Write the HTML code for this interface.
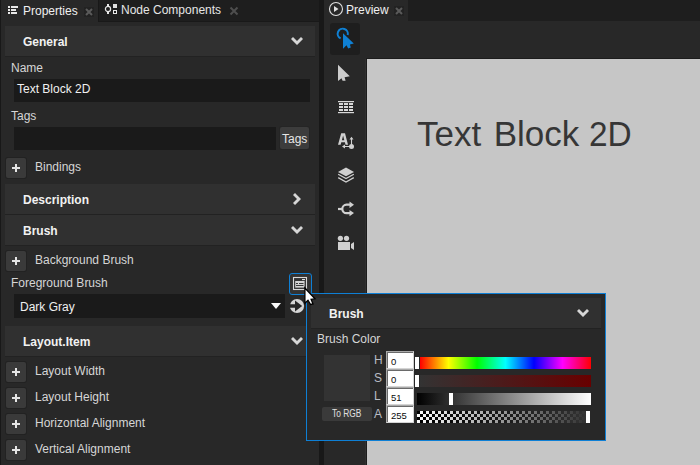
<!DOCTYPE html>
<html><head><meta charset="utf-8">
<style>
*{margin:0;padding:0;box-sizing:border-box}
html,body{width:700px;height:465px;overflow:hidden;background:#1e1e1e;font-family:"Liberation Sans",sans-serif;font-size:12px;color:#d6d6d6}
.a{position:absolute}
.t{position:absolute;white-space:nowrap;line-height:14px;height:14px}
.hdr{position:absolute;left:5px;width:310px;height:31px;background:#303030;border-bottom:1px solid #222}
.hdr .t{left:18px;top:9px!important;font-weight:bold;color:#f2f2f2}
.inp{position:absolute;background:#1a1a1a}
.plus{position:absolute;left:6px;width:20px;height:20px;background:#3a3a3a;border-radius:2px;box-shadow:0 0 0 1px #222}
.plus:before{content:"";position:absolute;left:6px;top:9px;width:8px;height:2px;background:#e6e6e6}
.plus:after{content:"";position:absolute;left:9px;top:6px;width:2px;height:8px;background:#e6e6e6}
.box{position:absolute;left:386px;width:28px;height:18px;background:#fff;border:1px solid;border-color:#a9a9a9 #d4d4d4 #d4d4d4 #a9a9a9;box-shadow:inset 1px 1px 0 #6a6a6a}
.box .v{position:absolute;left:4px;top:3.6px;font-size:9.5px;line-height:12px;color:#0a0a0a}
</style></head><body>
<!-- tab bar -->
<div class="a" style="left:0;top:0;width:1px;height:465px;background:#181818"></div>
<div class="a" style="left:1px;top:0;width:97px;height:22px;background:#282828"></div>
<div class="a" style="left:98px;top:0;width:1px;height:22px;background:#181818"></div>
<!-- list icon -->
<div class="a" style="left:8px;top:6px;width:2px;height:2px;background:#e8e8e8"></div>
<div class="a" style="left:8px;top:9px;width:2px;height:2px;background:#e8e8e8"></div>
<div class="a" style="left:8px;top:12px;width:2px;height:2px;background:#e8e8e8"></div>
<div class="a" style="left:11px;top:6px;width:7px;height:2px;background:#e8e8e8"></div>
<div class="a" style="left:11px;top:9px;width:5px;height:2px;background:#e8e8e8"></div>
<div class="a" style="left:11px;top:12px;width:6px;height:2px;background:#e8e8e8"></div>
<div class="t" style="left:23px;top:4px;color:#f0f0f0">Properties</div>
<div class="a" style="left:84px;top:7px;width:10px;height:10px;background:#222"></div>
<svg class="a" style="left:84px;top:7px" width="10" height="10"><path d="M2 2L8 8M8 2L2 8" stroke="#5a5a5a" stroke-width="2"/></svg>

<!-- node components icon -->
<svg class="a" style="left:103px;top:3px" width="16" height="12">
<circle cx="5" cy="6" r="2.6" fill="none" stroke="#e8e8e8" stroke-width="1.2"/>
<rect x="4" y="1" width="2" height="2.6" fill="#e8e8e8"/><rect x="4" y="8.4" width="2" height="2.6" fill="#e8e8e8"/>
<rect x="10" y="1" width="4" height="4" fill="#e0e0e0"/>
<rect x="10.5" y="7.5" width="3" height="3" fill="none" stroke="#e8e8e8" stroke-width="1"/>
</svg>
<div class="t" style="left:121px;top:3px;color:#e6e6e6">Node Components</div>
<svg class="a" style="left:229px;top:6px" width="10" height="10"><path d="M1.5 1.5L8.5 8.5M8.5 1.5L1.5 8.5" stroke="#4e4e4e" stroke-width="2"/></svg>

<!-- left panel -->
<div class="a" style="left:1px;top:22px;width:318px;height:443px;background:#282828"></div>
<div class="a" style="left:319px;top:0;width:5px;height:465px;background:#181818"></div>
<div class="a" style="left:99px;top:21px;width:220px;height:1px;background:#191919"></div>

<div class="hdr" style="top:26px"><div class="t" style="top:8px">General</div>
<svg class="a" style="left:0;top:0" width="310" height="30"><path d="M286 13L288 11L292 15L296 11L298 13L292 19Z" fill="#d6d6d6"/></svg></div>
<div class="t" style="left:11px;top:61px">Name</div>
<div class="inp" style="left:14px;top:79px;width:296px;height:23px"></div>
<div class="t" style="left:17px;top:82px;color:#f0f0f0">Text Block 2D</div>
<div class="t" style="left:11px;top:109px">Tags</div>
<div class="inp" style="left:14px;top:127px;width:262px;height:23px"></div>
<div class="a" style="left:280px;top:127px;width:29px;height:22px;background:#3c3c3c;border-radius:2px;box-shadow:0 0 0 1px #252525"></div>
<div class="t" style="left:282px;top:132px;color:#e6e6e6">Tags</div>
<div class="plus" style="top:158px"></div>
<div class="t" style="left:35px;top:160px">Bindings</div>

<div class="hdr" style="top:184px"><div class="t" style="top:8px">Description</div>
<svg class="a" style="left:0;top:0" width="310" height="30"><path d="M288 11L290 9L296 15L290 21L288 19L292 15Z" fill="#d6d6d6"/></svg></div>
<div class="hdr" style="top:215px"><div class="t" style="top:8px">Brush</div>
<svg class="a" style="left:0;top:0" width="310" height="30"><path d="M286 13L288 11L292 15L296 11L298 13L292 19Z" fill="#d6d6d6"/></svg></div>
<div class="plus" style="top:251px"></div>
<div class="t" style="left:35px;top:253px">Background Brush</div>
<div class="t" style="left:11px;top:276px">Foreground Brush</div>
<div class="a" style="left:289px;top:273px;width:23px;height:22px;border:1.5px solid #0e7fd5;border-radius:3px;background:#333"></div>
<svg class="a" style="left:290px;top:273px" width="20" height="20">
<rect x="3.5" y="4.5" width="13" height="12" fill="none" stroke="#d8d8d8" stroke-width="1.1"/>
<rect x="12" y="6" width="3" height="1.1" fill="#e0e0e0"/>
<rect x="5.2" y="8" width="9.4" height="6.6" fill="#d4d4d4"/>
<rect x="6" y="10" width="2" height="1" fill="#3a3a3a"/><rect x="9" y="10" width="4.5" height="1" fill="#3a3a3a"/>
<rect x="6" y="12" width="7.5" height="1" fill="#3a3a3a"/>
</svg>
<div class="inp" style="left:14px;top:294px;width:271px;height:24px"></div>
<div class="t" style="left:20px;top:300px;color:#f0f0f0">Dark Gray</div>
<svg class="a" style="left:271px;top:303px" width="10" height="6"><path d="M0 0H10L5 6Z" fill="#fafafa"/></svg>
<svg class="a" style="left:289px;top:298px" width="16" height="16">
<circle cx="8" cy="8" r="7.1" fill="#d6d6d6"/>
<path d="M0 6.3H6V2.6L13.2 8L6 13.5V9.7H0Z" fill="#282828"/>
</svg>

<div class="hdr" style="top:326px"><div class="t" style="top:8px">Layout.Item</div>
<svg class="a" style="left:0;top:0" width="310" height="30"><path d="M286 13L288 11L292 15L296 11L298 13L292 19Z" fill="#d6d6d6"/></svg></div>
<div class="plus" style="top:362px"></div>
<div class="t" style="left:35px;top:364px">Layout Width</div>
<div class="plus" style="top:388px"></div>
<div class="t" style="left:35px;top:390px">Layout Height</div>
<div class="plus" style="top:414px"></div>
<div class="t" style="left:35px;top:416px">Horizontal Alignment</div>
<div class="plus" style="top:440px"></div>
<div class="t" style="left:35px;top:442px">Vertical Alignment</div>

<!-- preview -->
<div class="a" style="left:324px;top:0;width:84px;height:22px;background:#282828"></div>
<svg class="a" style="left:328px;top:1px" width="16" height="16">
<circle cx="8" cy="8" r="6.5" fill="none" stroke="#e0e0e0" stroke-width="1.1"/>
<path d="M6 5L10.5 8L6 11Z" fill="#e0e0e0"/></svg>
<div class="t" style="left:346px;top:3px;color:#f0f0f0">Preview</div>
<div class="a" style="left:394px;top:6px;width:10px;height:10px;background:#222"></div>
<svg class="a" style="left:394px;top:6px" width="10" height="10"><path d="M2 2L8 8M8 2L2 8" stroke="#5a5a5a" stroke-width="2"/></svg>
<div class="a" style="left:324px;top:21px;width:376px;height:444px;background:#282828"></div>
<div class="a" style="left:330px;top:23px;width:30px;height:32px;background:#1e1e1e;border-radius:3px"></div>
<svg class="a" style="left:330px;top:23px" width="30" height="32">
<path d="M10.6 15.4A5.1 5.1 0 1 1 17.7 12.1" fill="none" stroke="#0f80d4" stroke-width="2"/>
<path d="M13 10.3V25.8L16.5 22.2L18.2 25.4L20.8 24.5L19.9 21.5L23.8 20.4Z" fill="#0f80d4"/>
</svg>
<!-- tools -->
<svg class="a" style="left:330px;top:60px" width="30" height="200">
<path d="M8 4.8V21L11.5 18.2L12.6 20.7H15.6L14.6 17.3L19.8 16.2Z" fill="#cdcdcd"/>
<rect x="8" y="41" width="16" height="1.2" fill="#d8d8d8"/>
<rect x="8" y="52" width="16" height="1.2" fill="#d8d8d8"/>
<g fill="#d8d8d8">
<rect x="9" y="43" width="4" height="2"/><rect x="14" y="43" width="4" height="2"/><rect x="19" y="43" width="4" height="2"/>
<rect x="9" y="46" width="4" height="2"/><rect x="14" y="46" width="4" height="2"/><rect x="19" y="46" width="4" height="2"/>
<rect x="9" y="49" width="4" height="2"/><rect x="14" y="49" width="4" height="2"/><rect x="19" y="49" width="4" height="2"/>
</g>
</svg>
<svg class="a" style="left:0;top:0" width="700" height="465">
<path fill-rule="evenodd" d="M338 144.8L341.2 133.2H345L348 144.8H345.5L344.9 142.3H341.3L340.6 144.8Z M341.9 140.2H344.3L343.1 135.6Z" fill="#d0d0d0"/>
<circle cx="351.5" cy="146.5" r="2.5" fill="#d0d0d0"/>
<path d="M351.5 146.5V139M344.5 146.5H351.5" stroke="#d0d0d0" stroke-width="1.1"/>
<path d="M349.5 139.6L351.5 136.8L353.5 139.6Z M345 144.5L342 146.5L345 148.5Z" fill="#d0d0d0"/>
</svg>
<svg class="a" style="left:330px;top:160px" width="30" height="30">
<path d="M8 12L16 7.6L24 12L16 16.2Z" fill="#d0d0d0"/>
<path d="M8.2 14.3L16 18.6L23.8 14.3M8.2 17.6L16 22L23.8 17.6" fill="none" stroke="#d0d0d0" stroke-width="1.3"/>
</svg>
<svg class="a" style="left:330px;top:195px" width="30" height="30">
<path d="M8 14H12" stroke="#d0d0d0" stroke-width="2.2"/>
<path d="M21 9.7H16.5A4.2 4.2 0 0 0 16.5 18.1H21" fill="none" stroke="#d0d0d0" stroke-width="2.2"/>
<path d="M19.5 6.5L24 9.7L19.5 12.9Z M19.5 14.9L24 18.1L19.5 21.3Z" fill="#d0d0d0"/>
</svg>
<svg class="a" style="left:330px;top:228px" width="30" height="30">
<circle cx="10.4" cy="10.3" r="2.6" fill="#d0d0d0"/><circle cx="16.5" cy="10.3" r="2.6" fill="#d0d0d0"/>
<rect x="8" y="14" width="12" height="8" fill="#d0d0d0"/>
<path d="M21 16L24 14V22L21 20Z" fill="#d0d0d0"/>
</svg>

<div class="a" style="left:365px;top:59px;width:1px;height:406px;background:#303030"></div>
<div class="a" style="left:366px;top:58px;width:334px;height:407px;background:#1c1c1c"></div>
<div class="a" style="left:367px;top:59px;width:333px;height:406px;background:#c6c6c6"></div>
<div class="a" style="left:417px;top:114px;font-size:35px;line-height:40px;color:#363636;white-space:nowrap">Text <span style="margin-left:2.8px">Block</span> <span style="display:inline-block;margin-left:0px;transform:scaleX(0.955);transform-origin:0 0">2D</span></div>

<!-- popup -->
<div class="a" style="left:306px;top:293px;width:300px;height:148px;background:#282828;border:1px solid #0e7fd5"></div>
<div class="a" style="left:311px;top:298px;width:290px;height:31px;background:#303030;border-bottom:1px solid #222"></div>
<div class="t" style="left:329px;top:307px;font-weight:bold;color:#f2f2f2">Brush</div>
<svg class="a" style="left:570px;top:300px" width="30" height="25"><path d="M7 11L9 9L13 13L17 9L19 11L13 17Z" fill="#d6d6d6"/></svg>
<div class="t" style="left:317px;top:332px">Brush Color</div>
<div class="a" style="left:324px;top:355px;width:46px;height:46px;background:#333"></div>
<div class="a" style="left:322px;top:407px;width:50px;height:14px;background:#3a3a3a;border-radius:2px"></div>
<div class="t" style="left:332px;top:407px;font-size:10px;color:#e0e0e0;transform:scaleX(0.84);transform-origin:0 0">To RGB</div>
<div class="t" style="left:374px;top:353px;color:#b8bcc4">H</div>
<div class="t" style="left:374px;top:371px;color:#b8bcc4">S</div>
<div class="t" style="left:374px;top:389px;color:#b8bcc4">L</div>
<div class="t" style="left:374px;top:407px;color:#b8bcc4">A</div>

<!-- hsla inputs -->
<div class="box" style="top:351px"><div class="v">0</div></div>
<div class="box" style="top:369px"><div class="v">0</div></div>
<div class="box" style="top:387px"><div class="v">51</div></div>
<div class="box" style="top:405px"><div class="v">255</div></div>
<!-- sliders -->
<div class="a" style="left:420px;top:357px;width:171px;height:12px;background:linear-gradient(to right,#ff0000 0%,#ffff00 16.67%,#00ff00 33.33%,#00ffff 50%,#0000ff 66.67%,#ff00ff 83.33%,#ff0000 100%)"></div>
<div class="a" style="left:415px;top:357px;width:4px;height:12px;background:#fff"></div>
<div class="a" style="left:420px;top:375px;width:171px;height:12px;background:linear-gradient(to right,#333333,#680000)"></div>
<div class="a" style="left:415px;top:375px;width:4px;height:12px;background:#fff"></div>
<div class="a" style="left:417px;top:393px;width:174px;height:12px;background:linear-gradient(to right,#000,#fff)"></div>
<div class="a" style="left:449px;top:393px;width:4px;height:12px;background:#fff"></div>
<div class="a" style="left:417px;top:411px;width:169px;height:12px;background-image:linear-gradient(to right,rgba(51,51,51,0),rgba(51,51,51,1)),conic-gradient(#fff 25%,#000 0 50%,#fff 0 75%,#000 0);background-size:100% 100%,6px 6px"></div>
<div class="a" style="left:586px;top:411px;width:4px;height:12px;background:#fff"></div>
<!-- cursor -->
<svg class="a" style="left:0;top:0" width="700" height="465">
<path d="M304.9 288V303.2L308 300.2L310.6 304.5L313 304L311.1 299.2L315 298.8Z" fill="#fff" stroke="#000" stroke-width="1.3" stroke-linejoin="miter"/>
</svg>
</body></html>
